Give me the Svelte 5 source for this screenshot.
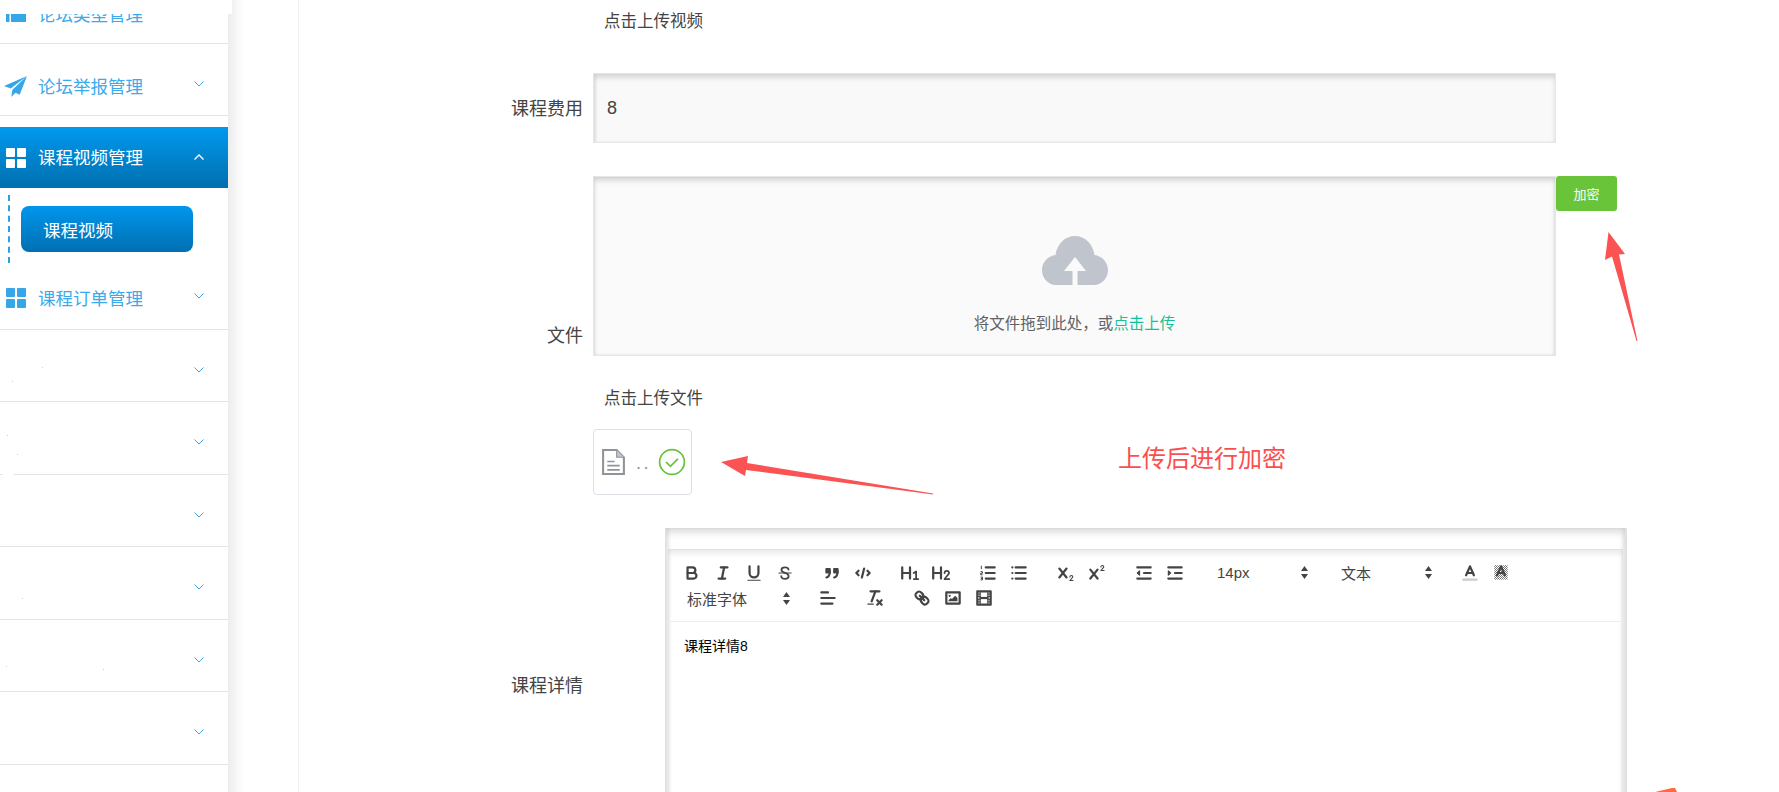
<script>
    // 侧边栏菜单（标题为空的行在截图里被涂掉了，只剩几个小点）
    const blankRows = [
        { dots: [[42, 37], [12, 51]] },
        { dots: [[7, 33], [17, 52]], gap: true },
        { dots: [] },
        { dots: [[22, 51]] },
        { dots: [[6, 46], [103, 49]] },
        { dots: [] }
    ];

    const icons = {
        bold: '<path d="M5,4H9.5A2.5,2.5,0,0,1,12,6.5v0A2.5,2.5,0,0,1,9.5,9H5V4Z"/><path d="M5,9h5.5A2.5,2.5,0,0,1,13,11.5v0A2.5,2.5,0,0,1,10.5,14H5V9Z"/>',
        italic: '<line x1="7" x2="13" y1="4" y2="4"/><line x1="5" x2="11" y1="14" y2="14"/><line x1="8" x2="10" y1="14" y2="4"/>',
        underline: '<path d="M5,3V9a4,4,0,0,0,4,4h0a4,4,0,0,0,4-4V3"/><rect x="3" y="15" width="12" height="1" rx=".5" fill="#444" stroke="none"/>',
        strike: '<path stroke-width="1.6" d="M12.2,6C12,4.6,10.8,4,9,4C7,4,5.8,5,5.8,6.3C5.8,7.6,6.9,8.2,9,8.8C11.4,9.5,12.3,10.5,12.3,12C12.3,13.5,11,14.3,9,14.3C7,14.3,5.7,13.4,5.6,11.9"/><line stroke-width="1" x1="3.5" x2="14.5" y1="9" y2="9"/>',
        quote: '<rect x="4" y="5.5" width="3" height="3" fill="#444"/><rect x="11" y="5.5" width="3" height="3" fill="#444"/><path d="M7,8c0,4-3,5-3,5"/><path d="M14,8c0,4-3,5-3,5"/>',
        code: '<polyline points="5 7 3 9 5 11"/><polyline points="13 7 15 9 13 11"/><line x1="10" x2="8" y1="5" y2="13"/>',
        h1: '<path d="M2,4V14M9,4V14M2,9H9"/><path stroke-width="1.6" d="M12.3,9L14.5,7.6V14.5M12.4,14.5H16.4"/>',
        h2: '<path d="M2,4V14M9,4V14M2,9H9"/><path stroke-width="1.6" d="M12.2,9c0-1.3,1-2,2-2s2,.7,2,1.9c0,1.5-2.5,2.9-4,5.6h4.3"/>',
        ol: '<line x1="7" x2="15" y1="4" y2="4"/><line x1="7" x2="15" y1="9" y2="9"/><line x1="7" x2="15" y1="14" y2="14"/><path stroke-width=".9" stroke-linecap="butt" d="M3,2.5V5.5M2.3,7.8H4V9.2H2.4V10.6H4.2M2.3,12.7H4.1V15.2H2.3M2.6,14H4"/>',
        ul: '<line x1="6" x2="15" y1="4" y2="4"/><line x1="6" x2="15" y1="9" y2="9"/><line x1="6" x2="15" y1="14" y2="14"/><line x1="3" x2="3" y1="4" y2="4"/><line x1="3" x2="3" y1="9" y2="9"/><line x1="3" x2="3" y1="14" y2="14"/>',
        sub: '<path d="M3,5L9.5,13M9.5,5L3,13"/><path stroke-width="1" d="M12.5,12.5c0-.8.7-1.2,1.3-1.2s1.3.4,1.3,1.1c0,1-1.7,1.8-2.6,3.4h2.9"/>',
        sup: '<path d="M3,6L9.5,14M9.5,6L3,14"/><path stroke-width="1" d="M12.5,3.5c0-.8.7-1.2,1.3-1.2s1.3.4,1.3,1.1c0,1-1.7,1.8-2.6,3.4h2.9"/>',
        outdent: '<line x1="3" x2="15" y1="14" y2="14"/><line x1="3" x2="15" y1="4" y2="4"/><line x1="9" x2="15" y1="9" y2="9"/><polyline points="5 7 5 11 3 9 5 7" fill="#444" stroke-width="1"/>',
        indent: '<line x1="3" x2="15" y1="14" y2="14"/><line x1="3" x2="15" y1="4" y2="4"/><line x1="9" x2="15" y1="9" y2="9"/><polyline points="3 7 3 11 5 9 3 7" fill="#444" stroke-width="1"/>',
        color: '<line x1="3" x2="15" y1="15" y2="15" stroke="#ccc"/><polyline points="5.5 11 9 3 12.5 11"/><line x1="11.6" x2="6.4" y1="9" y2="9"/>',
        background: '<defs><pattern id="hatch" width="1.8" height="1.8" patternUnits="userSpaceOnUse"><rect width=".9" height=".9" fill="#777" stroke="none"/><rect x=".9" y=".9" width=".9" height=".9" fill="#777" stroke="none"/></pattern></defs><rect x="3" y="2" width="12" height="13" fill="url(#hatch)" stroke="none"/><polyline points="5.5 11 9 3 12.5 11"/><line x1="11.6" x2="6.4" y1="9" y2="9"/>',
        align: '<line x1="3" x2="15" y1="9" y2="9"/><line x1="3" x2="13" y1="14" y2="14"/><line x1="3" x2="9" y1="4" y2="4"/>',
        clean: '<line x1="5" x2="13" y1="3" y2="3"/><line x1="6" x2="9.35" y1="12" y2="3"/><line x1="11" x2="15" y1="11" y2="15"/><line x1="15" x2="11" y1="11" y2="15"/><rect x="2" y="14" width="6" height="1" rx=".5" fill="#444" stroke="none"/>',
        link: '<line x1="7" x2="11" y1="7" y2="11"/><path d="M8.9,4.577a3.476,3.476,0,0,1,.36,4.679A3.476,3.476,0,0,1,4.577,8.9C3.185,7.5,2.035,6.4,4.217,4.217S7.5,3.185,8.9,4.577Z"/><path d="M13.423,9.1a3.476,3.476,0,0,0-4.679-.36,3.476,3.476,0,0,0,.36,4.679c1.392,1.392,2.5,2.542,4.679.36S14.815,10.5,13.423,9.1Z"/>',
        image: '<rect x="3" y="4" width="12" height="10"/><circle cx="6" cy="7" r="1" fill="#444" stroke="none"/><polyline points="5 12 5 11 7 9 8 10 11 7 13 9 13 12 5 12" fill="#444" stroke="none"/>',
        video: '<rect x="3" y="3" width="12" height="12"/><g fill="#444" stroke="none"><rect x="5" y="3" width="1" height="12"/><rect x="12" y="3" width="1" height="12"/><rect x="5" y="8" width="8" height="2"/><rect x="3" y="5" width="3" height="1"/><rect x="3" y="7" width="3" height="1"/><rect x="3" y="10" width="3" height="1"/><rect x="3" y="12" width="3" height="1"/><rect x="12" y="5" width="3" height="1"/><rect x="12" y="7" width="3" height="1"/><rect x="12" y="10" width="3" height="1"/><rect x="12" y="12" width="3" height="1"/></g>'
    };

    const toolbar = [
        ["bold", "italic", "underline", "strike"],
        ["quote", "code"],
        ["h1", "h2"],
        ["ol", "ul"],
        ["sub", "sup"],
        ["outdent", "indent"],
        { label: "14px", width: 108 },
        { label: "文本", width: 108 },
        ["color", "background"],
        { label: "标准字体", width: 120 },
        ["align"],
        ["clean"],
        ["link", "image", "video"]
    ];
</script>

{#snippet chevron(up)}
    <svg class="chevron" class:up viewBox="0 0 10 6" width="10" height="6">
        <polyline points={up ? "0.5 5.5 5 1 9.5 5.5" : "0.5 0.5 5 5 9.5 0.5"} />
    </svg>
{/snippet}

{#snippet grid(color)}
    <svg class="menu-icon" viewBox="0 0 20 20" width="20" height="20" fill={color}>
        <rect width="9" height="9" rx="1" />
        <rect x="11" width="9" height="9" rx="1" />
        <rect y="11" width="9" height="9" rx="1" />
        <rect x="11" y="11" width="9" height="9" rx="1" />
    </svg>
{/snippet}

<div class="page">
    <div class="top-cover"></div>

    <aside class="sidebar">
        <div class="menu-row">
            <svg class="menu-icon" viewBox="0 0 20 16" width="20" height="16" fill="#35a7e8">
                <rect width="3.5" height="16" />
                <rect x="5" width="15" height="16" />
            </svg>
            <span>论坛类型管理</span>
            {@render chevron(false)}
        </div>
        <div class="menu-row">
            <svg class="menu-icon plane" viewBox="0 0 22 20" width="23" height="21" fill="#35a7e8">
                <path d="M22 0 L0 9.5 L6.5 12 Z" />
                <path d="M22 0 L8 13 L7 20 L11 16 L15 18 Z" />
            </svg>
            <span>论坛举报管理</span>
            {@render chevron(false)}
        </div>
        <div class="menu-active">
            {@render grid("#fff")}
            <span>课程视频管理</span>
            {@render chevron(true)}
        </div>
        <div class="submenu">
            <div class="sub-item">课程视频</div>
        </div>
        <div class="menu-row order">
            {@render grid("#35a7e8")}
            <span>课程订单管理</span>
            {@render chevron(false)}
        </div>
        {#each blankRows as row}
            <div class="menu-row">
                {#each row.dots as d}
                    <i class="dot" style:left="{d[0]}px" style:top="{d[1]}px"></i>
                {/each}
                {#if row.gap}<i class="line-gap"></i>{/if}
                {@render chevron(false)}
            </div>
        {/each}
    </aside>

    <div class="gutter"></div>

    <main class="form">
        <div class="caption first">点击上传视频</div>

        <div class="row input-row">
            <span class="label">课程费用</span>
            <div class="input">8</div>
        </div>

        <div class="row upload-row">
            <span class="label">文件</span>
            <div class="dropzone">
                <svg viewBox="0 0 66 49" width="66" height="49">
                    <path fill="#c0c4cc" d="M14 49 C6 49 0 42 0 34 C0 26 6 20 13.5 19 C15 8 23 0 33 0 C43 0 51 8 52.5 19 C60 20 66 26 66 34 C66 42 60 49 52 49 Z" />
                    <path fill="#fafafa" d="M33 21 L44 35 L35.5 35 L35.5 49 L30.5 49 L30.5 35 L22 35 Z" />
                </svg>
                <p>将文件拖到此处，或<em>点击上传</em></p>
            </div>
            <button class="encrypt">加密</button>
        </div>

        <div class="caption second">点击上传文件</div>

        <div class="file-card">
            <svg viewBox="0 0 22 25" width="23" height="26" fill="none" stroke="#909399" stroke-width="2">
                <path d="M1 1 H14 L21 8 V24 H1 Z" />
                <path d="M14 1 V8 H21" fill="#c0c4cc" stroke-width="1" />
                <path d="M5 12 H12 M5 16 H17 M5 20 H17" stroke-width="1.6" />
            </svg>
            <span class="file-name">..</span>
            <svg class="check" viewBox="0 0 26 26" width="28" height="28" fill="none" stroke="#67c23a">
                <circle cx="13" cy="13" r="11.5" stroke-width="1.6" />
                <polyline points="7.5 13 11.5 17 18.5 10" stroke-width="1.6" />
            </svg>
        </div>

        <div class="row editor-row">
            <span class="label">课程详情</span>
            <div class="editor">
                <div class="editor-inner">
                    <div class="toolbar">
                        {#each toolbar as group}
                            {#if Array.isArray(group)}
                                <span class="group">
                                    {#each group as name}
                                        <span class="tool">
                                            <svg viewBox="0 0 18 18" width="20" height="20" fill="none" stroke="#444" stroke-width="2" stroke-linecap="round" stroke-linejoin="round">
                                                {@html icons[name]}
                                            </svg>
                                        </span>
                                    {/each}
                                </span>
                            {:else}
                                <span class="picker" style:width="{group.width}px">
                                    {group.label}
                                    <svg viewBox="0 0 7 13" width="7" height="13" fill="#444">
                                        <polygon points="3.5 0 7 5 0 5" />
                                        <polygon points="0 8 7 8 3.5 13" />
                                    </svg>
                                </span>
                            {/if}
                        {/each}
                    </div>
                    <div class="content">课程详情8</div>
                </div>
            </div>
        </div>
    </main>

    <!-- 截图上后加的红色标注 -->
    <svg class="marks" viewBox="0 0 1779 792" width="1779" height="792">
        <polygon fill="#fb5353" points="1608.5,232 1625,254 1619,254.5 1637.5,341 1636.5,341 1612,256.5 1605,260" />
        <polygon fill="#fb5353" points="721,462 748,456 747,463 933,493.5 933,494.5 746,470 745,476" />
        <polygon fill="#ff6b3d" points="1655,792 1672,788 1675,788 1677,792" />
    </svg>
    <span class="note">上传后进行加密</span>
</div>

<style>
    :global(body) {
        margin: 0;
        overflow: hidden;
        background: #fff;
    }
    .page {
        position: relative;
        display: flex;
        width: 1779px;
        height: 792px;
        overflow: hidden;
        background: #fff;
        font-family: "Liberation Sans", "Noto Sans CJK SC", sans-serif;
        color: #444;
    }
    .top-cover {
        position: absolute;
        top: 0;
        left: 0;
        z-index: 5;
        width: 232px;
        height: 14px;
        background: #fff;
    }

    .sidebar {
        flex: 0 0 228px;
        margin-top: -29px;
        font-size: 17.5px;
        color: #3ba9ea;
    }
    .menu-row {
        position: relative;
        box-sizing: border-box;
        display: flex;
        align-items: center;
        height: 72.5px;
        padding: 14px 24px 0 6px;
        border-bottom: 1px solid #e4e4e4;
    }
    .menu-row.order {
        padding-top: 11px;
    }
    .menu-row > span {
        padding-bottom: 1px;
    }
    .menu-icon {
        flex: none;
        margin-right: 12px;
    }
    .plane {
        margin-left: -2px;
        margin-right: 11px;
    }
    .chevron {
        flex: none;
        margin-left: auto;
        margin-top: -5px;
        fill: none;
        stroke: #3ba9ea;
        stroke-width: 1;
    }
    .chevron.up {
        margin-top: -2px;
        stroke: #fff;
        stroke-width: 1.4;
    }
    .dot {
        position: absolute;
        width: 1px;
        height: 1px;
        background: #a9d8f5;
    }
    .line-gap {
        position: absolute;
        left: 3px;
        bottom: -1px;
        width: 11px;
        height: 1px;
        background: #fff;
    }
    .menu-active {
        display: flex;
        align-items: center;
        height: 61px;
        margin-top: 11px;
        padding: 0 24px 0 6px;
        color: #fff;
        background: linear-gradient(#0099ef, #006fae);
    }
    .menu-active span {
        padding-bottom: 2px;
    }
    .submenu {
        position: relative;
        height: 69px;
        padding-top: 18px;
        box-sizing: border-box;
    }
    .submenu::before {
        content: "";
        position: absolute;
        left: 8px;
        top: 7px;
        height: 68px;
        border-left: 2px dashed #2f9fe0;
    }
    .sub-item {
        box-sizing: border-box;
        height: 46px;
        margin-left: 21px;
        width: 172px;
        padding-left: 22px;
        line-height: 50px;
        color: #fff;
        border-radius: 8px;
        background: linear-gradient(#0096ec, #0070b2);
    }

    .gutter {
        flex: 0 0 70px;
        border-right: 1px solid #f1f1f1;
        background: linear-gradient(to right, #ececec, #fff 15px);
    }

    .form {
        flex: 1;
        min-width: 0;
    }
    .caption {
        padding-left: 305px;
        height: 40px;
        line-height: 40px;
        font-size: 16.5px;
        color: #444;
    }
    .first {
        margin-top: 1px;
    }
    .row {
        display: flex;
        align-items: center;
        margin-top: 33px;
    }
    .input-row {
        margin-top: 32px;
    }
    .label {
        flex: none;
        box-sizing: border-box;
        width: 284px;
        margin-right: 10px;
        padding-bottom: 3px;
        text-align: right;
        font-size: 18px;
        color: #444;
    }
    .input {
        box-sizing: border-box;
        width: 963px;
        height: 70px;
        padding-left: 13px;
        line-height: 68px;
        font-size: 18px;
        color: #444;
        background: #f9f9f9;
        border: 1px solid #e6e6e6;
        box-shadow: inset 0 4px 5px rgba(0, 0, 0, 0.13), inset 2px 0 3px rgba(0, 0, 0, 0.06);
    }
    .upload-row {
        align-items: flex-start;
    }
    .upload-row .label {
        align-self: flex-end;
        padding-bottom: 9px;
    }
    .dropzone {
        box-sizing: border-box;
        width: 963px;
        height: 180px;
        padding-top: 59px;
        text-align: center;
        background: #fafafa;
        border: 1px solid #e6e6e6;
        box-shadow: inset 0 4px 5px rgba(0, 0, 0, 0.13), inset 0 0 3px rgba(0, 0, 0, 0.1);
    }
    .dropzone svg {
        display: block;
        margin: 0 auto;
    }
    .dropzone p {
        margin: 29px 0 0;
        font-size: 15.5px;
        line-height: 20px;
        color: #606266;
    }
    .dropzone em {
        font-style: normal;
        color: #10c29b;
    }
    .encrypt {
        width: 61px;
        height: 35px;
        padding: 0;
        border: 0;
        border-radius: 3px;
        font-family: inherit;
        font-size: 13px;
        color: #fff;
        background: #6ac43a;
    }
    .second {
        margin-top: 22px;
    }
    .file-card {
        box-sizing: border-box;
        display: flex;
        align-items: center;
        width: 99px;
        height: 66px;
        margin: 11px 0 0 294px;
        padding-left: 8px;
        border: 1px solid #dcdfe6;
        border-radius: 4px;
    }
    .file-card svg {
        flex: none;
    }
    .file-name {
        width: 32px;
        padding-left: 11px;
        box-sizing: border-box;
        margin-top: 2px;
        font-size: 18px;
        letter-spacing: 2.5px;
        color: #909399;
    }
    .check {
        margin-left: 1px;
    }
    .editor-row {
        align-items: center;
    }
    .editor {
        box-sizing: border-box;
        width: 962px;
        height: 314px;
        margin-left: 72px;
        padding: 21px 2px 0;
        background: #fff;
        border-left: 1px solid #dde1e6;
        border-right: 2px solid #dde1e6;
        box-shadow: inset 0 5px 7px rgba(0, 0, 0, 0.13), inset 3px 0 3px rgba(0, 0, 0, 0.05), inset -3px 0 3px rgba(0, 0, 0, 0.05);
    }
    .editor-inner {
        height: 100%;
        border-top: 1px solid #dde1e6;
        box-shadow: inset 0 4px 5px rgba(0, 0, 0, 0.08);
    }
    .toolbar {
        box-sizing: border-box;
        display: flex;
        flex-wrap: wrap;
        gap: 0 16px;
        padding: 10px 8px;
        border-bottom: 1px solid #ededed;
    }
    .group {
        display: inline-flex;
    }
    .tool {
        display: flex;
        align-items: center;
        justify-content: center;
        width: 31px;
        height: 25.5px;
    }
    .picker {
        box-sizing: border-box;
        display: flex;
        align-items: center;
        justify-content: space-between;
        height: 25.5px;
        padding: 0 6px 0 11px;
        font-size: 15px;
        color: #444;
    }
    .content {
        padding: 14px 16px;
        font-size: 14px;
        line-height: 20px;
        color: #000;
    }

    .marks {
        position: absolute;
        top: 0;
        left: 0;
        pointer-events: none;
    }
    .note {
        position: absolute;
        left: 1118px;
        top: 445px;
        font-size: 24px;
        line-height: 28px;
        color: #fb4f4f;
    }
</style>
